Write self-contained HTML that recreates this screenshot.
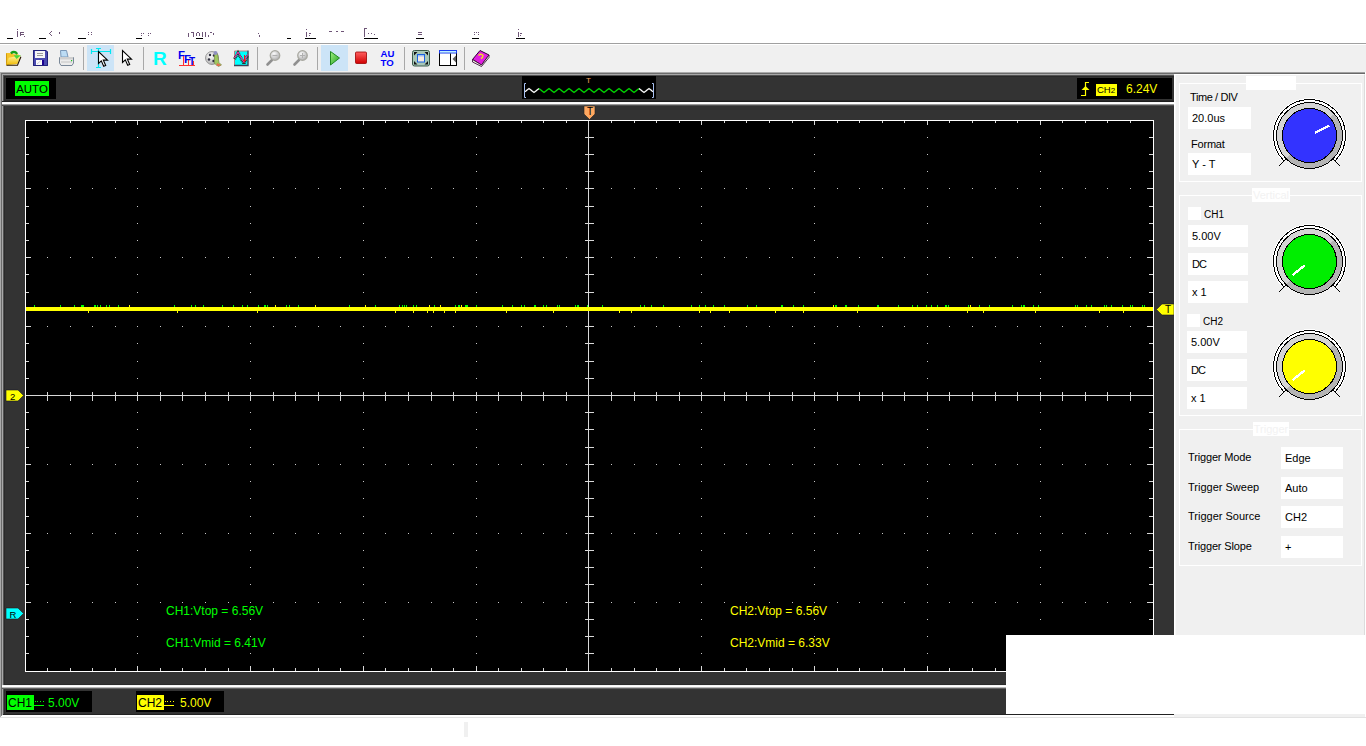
<!DOCTYPE html>
<html><head><meta charset="utf-8">
<style>
*{box-sizing:border-box}
html,body{margin:0;padding:0}
body{width:1366px;height:746px;overflow:hidden;background:#fff;position:relative;font-family:"Liberation Sans",sans-serif;}
.a{position:absolute}
.tb{background:#f0f0f0}
.sep{position:absolute;width:1px;background:#a0a0a0;border-right:1px solid #fff;width:2px}
.panel-lbl{position:absolute;font-size:11px;color:#000;white-space:nowrap}
.ebox{position:absolute;background:#fff;font-size:11px;color:#000;padding-left:4px;white-space:nowrap}
.grp{position:absolute;border:1px solid #fff;box-shadow:inset 0 0 0 0 #ddd}
.gtitle{position:absolute;background:#fff;color:#f2f2f2;font-size:11px;line-height:14px;text-align:center}
</style></head><body>
<!-- menu -->
<div class="a" style="left:0;top:43px;width:1366px;height:1px;background:#a0a0a0"></div>
<div class="a tb" style="left:0;top:44px;width:1366px;height:28px;border-top:1px solid #fff"></div>
<svg class="a" style="left:0;top:0" width="560" height="44" shape-rendering="crispEdges"><path d="M7 38h6v1h-6zM39 38h7v1h-7zM78 38h8v1h-8zM136 38h6v1h-6zM196 38h7v1h-7zM287 38h4v1h-4zM305 38h11v1h-11zM364 38h14v1h-14zM416 38h8v1h-8zM472 38h7v1h-7zM516 38h9v1h-9z" fill="#000"/><path d="M17 29h1v1h-1zM17 31h1v6h-1zM20 32h1v4h-1zM21 32h3v1h-3zM21 34h3v1h-3zM24 36h1v1h-1zM51 31h1v1h-1zM50 32h1v1h-1zM49 33h1v1h-1zM50 34h1v1h-1zM51 35h1v1h-1zM59 32h1v2h-1zM88 32h1v1h-1zM91 32h1v1h-1zM88 34h1v1h-1zM91 34h1v1h-1zM141 33h1v1h-1zM143 33h1v1h-1zM148 33h1v1h-1zM150 33h1v1h-1zM141 35h1v1h-1zM148 35h1v1h-1zM188 33h1v4h-1zM191 32h1v1h-1zM192 32h2v1h-2zM193 33h1v4h-1zM196 33h1v3h-1zM199 33h1v3h-1zM197 32h2v1h-2zM202 32h1v5h-1zM205 32h1v5h-1zM208 35h1v2h-1zM210 32h2v1h-2zM213 33h1v2h-1zM258 33h1v1h-1zM259 35h1v2h-1zM306 29h1v1h-1zM306 32h1v5h-1zM309 33h2v1h-2zM309 35h1v1h-1zM329 31h3v1h-3zM336 31h2v1h-2zM341 31h3v1h-3zM364 28h3v1h-3zM364 29h1v8h-1zM368 33h1v1h-1zM371 33h1v1h-1zM374 34h1v1h-1zM418 32h4v1h-4zM418 34h4v1h-4zM474 32h1v1h-1zM476 32h1v1h-1zM478 32h1v1h-1zM474 34h1v1h-1zM478 34h1v1h-1zM518 29h1v1h-1zM518 32h1v5h-1zM520 33h2v1h-2zM520 35h1v1h-1z" fill="#4a2a55" fill-opacity="0.8"/></svg>
<div class="a" style="left:83px;top:47px;width:1px;height:23px;background:#a8a8a8"></div><div class="a" style="left:143px;top:47px;width:1px;height:23px;background:#a8a8a8"></div><div class="a" style="left:257px;top:47px;width:1px;height:23px;background:#a8a8a8"></div><div class="a" style="left:317px;top:47px;width:1px;height:23px;background:#a8a8a8"></div><div class="a" style="left:404px;top:47px;width:1px;height:23px;background:#a8a8a8"></div><div class="a" style="left:464px;top:47px;width:1px;height:23px;background:#a8a8a8"></div><div class="a" style="left:87px;top:45px;width:27px;height:26px;background:#cce4f7"></div><div class="a" style="left:321px;top:45px;width:27px;height:26px;background:#cce4f7"></div><svg class="a" style="left:0;top:0" width="520" height="72">
<defs>
<linearGradient id="fy" x1="0" y1="0" x2="0" y2="1"><stop offset="0" stop-color="#fff6a0"/><stop offset="1" stop-color="#f0b800"/></linearGradient>
<linearGradient id="pg" x1="0" y1="0" x2="1" y2="1"><stop offset="0" stop-color="#a0f080"/><stop offset="1" stop-color="#20a020"/></linearGradient>
<radialGradient id="mg" cx="0.4" cy="0.35" r="0.7"><stop offset="0" stop-color="#fff"/><stop offset="1" stop-color="#a8a8a8"/></radialGradient>
<linearGradient id="rg" x1="0" y1="0" x2="0" y2="1"><stop offset="0" stop-color="#ff6060"/><stop offset="1" stop-color="#d00000"/></linearGradient>
</defs>
<!-- open folder -->
<path d="M6 53h6.5l1 1.2h5v3.5l-12.5 7.8z" fill="#f6c428"/>
<path d="M6.5 53.5v11.5" stroke="#d09a10" stroke-width="1"/>
<path d="M8.8 57.8l12 -2.2 -3.4 8.4 -11.2 1.2z" fill="url(#fy)"/>
<path d="M6.5 65.3h11l3.4 -8.6" stroke="#2a1800" stroke-width="1.1" fill="none"/>
<path d="M10.8 53.2q3.8 -2.6 6.4 0.8" stroke="#18a018" stroke-width="2.3" fill="none"/>
<path d="M13.6 55.3h7.4l-4.4 3.6z" fill="#4ad83a"/>
<!-- floppy -->
<path d="M33 50h13l2 2v14h-15z" fill="#4a4ab0"/>
<path d="M33.5 50.5h12.5l1.5 1.5v13.5h-14z" fill="none" stroke="#23237a" stroke-width="1"/>
<rect x="35" y="51" width="10" height="7" fill="#f6f6f6"/>
<path d="M37 53.5h6M37 55.5h6" stroke="#9a9a9a" stroke-width="1"/>
<rect x="36" y="60" width="6" height="5" fill="#fafafa"/>
<rect x="42" y="60" width="2" height="5" fill="#1c0090"/>
<path d="M37 64l4 -3.5" stroke="#c0c0d0" stroke-width="0.8"/>
<!-- printer -->
<path d="M60.5 50.5h6l1.5 6.5h-7z" fill="#bcdcf4" stroke="#7a98b8" stroke-width="1"/>
<path d="M59.5 57.5h14v5.5l-1.5 2.5h-11l-1.5 -2.5z" fill="#ececec" stroke="#7a8898" stroke-width="1"/>
<rect x="60" y="57" width="13" height="2.5" fill="#cfcfcf"/>
<rect x="61" y="61" width="11" height="2" fill="#d8d8d8"/>
<rect x="71" y="60" width="1.2" height="1.2" fill="#20c020"/>
<!-- crosshair select -->
<path d="M91 51.5h20M91.5 49v5M110.5 49v5M98.5 48v20M96 48.5h5M96 67.5h5" stroke="#00e8f0" stroke-width="1.2" fill="none"/>
<path d="M98.5 51.5v12l2.8 -2.6 2.4 5.4 2 -0.9 -2.4 -5.3h4.2z" fill="#fff" stroke="#000" stroke-width="1.1" stroke-linejoin="miter"/>
<!-- arrow -->
<path d="M122.5 50.5v12l2.8 -2.6 2.4 5.4 2 -0.9 -2.4 -5.3h4.2z" fill="#fff" stroke="#000" stroke-width="1.1"/>
<!-- R -->
<text x="153" y="65" font-family="Liberation Sans" font-weight="bold" font-size="19" fill="#00ffff">R</text>
<!-- FFT -->
<text x="178" y="58.6" font-family="Liberation Sans" font-weight="bold" font-size="11.5" fill="#0000ee">F</text>
<text x="184" y="63" font-family="Liberation Sans" font-weight="bold" font-size="11.5" fill="#0000ee">F</text>
<text x="189" y="64.6" font-family="Liberation Sans" font-weight="bold" font-size="10" fill="#0000ee">T</text>
<path d="M179 65.5h16M183.5 56v9M188.5 60v5M193.5 61v4" stroke="#ff3030" stroke-width="1" fill="none"/>
<!-- film reel -->
<circle cx="212" cy="58" r="6.5" fill="url(#mg)" stroke="#8a8a8a" stroke-width="0.8"/>
<circle cx="210" cy="55" r="1.2" fill="#303040"/><circle cx="214" cy="55.5" r="1.2" fill="#303040"/><circle cx="209" cy="59.5" r="1.2" fill="#303040"/><circle cx="213.5" cy="61" r="1.2" fill="#303040"/>
<path d="M214.5 52.5l3 1 1.5 9 2.5 2.5 -3 1.5 -4 -3z" fill="#a0c860" stroke="#708040" stroke-width="0.6"/>
<path d="M217 63l4 2 -1.5 1h-3z" fill="#e07050"/>
<circle cx="215.5" cy="53" r="2" fill="#9090c0"/>
<!-- waveform icon -->
<rect x="234" y="51" width="14" height="14" fill="#00ffff"/>
<path d="M234.5 65v-14h13" stroke="#b88080" stroke-width="1" fill="none"/>
<path d="M248 50.5v15h-14" stroke="#3a4458" stroke-width="1.4" fill="none"/>
<path d="M234.5 59l3.5 -6 6 10.5 3.5 -8" stroke="#2a3a2a" stroke-width="3.2" fill="none" stroke-dasharray="1 0.6"/>
<path d="M234.5 58l3.5 -6 6 10.5 3.5 -8" stroke="#ff20b0" stroke-width="1" fill="none"/>
<path d="M244.5 55v6.5M243 59.5l1.5 2 1.5 -2" stroke="#ff1010" stroke-width="1" fill="none"/>
<!-- zoom out -->
<path d="M267.5 64.5l4.5 -4.5" stroke="#909090" stroke-width="2.6" stroke-linecap="round"/>
<circle cx="275" cy="55.5" r="4.8" fill="url(#mg)" stroke="#a8a8a0" stroke-width="1.2"/>
<path d="M272.5 55.5h5" stroke="#b0b0b0" stroke-width="1.2"/>
<!-- zoom in -->
<path d="M294.5 64.5l4.5 -4.5" stroke="#909090" stroke-width="2.6" stroke-linecap="round"/>
<circle cx="302.5" cy="55.5" r="4.8" fill="url(#mg)" stroke="#a8a8a0" stroke-width="1.2"/>
<path d="M300 55.5h5M302.5 53v5" stroke="#b0b0b0" stroke-width="1.2"/>
<!-- play -->
<path d="M330.5 51.5l9 6.5-9 7z" fill="url(#pg)" stroke="#208a20" stroke-width="1"/>
<!-- stop -->
<rect x="355.5" y="52" width="11" height="11.5" rx="1" fill="url(#rg)" stroke="#9a0000" stroke-width="0.8"/>
<!-- AUTO -->
<text x="380.5" y="57" font-family="Liberation Sans" font-weight="bold" font-size="9.6" fill="#0000ff">AU</text>
<text x="380.5" y="66" font-family="Liberation Sans" font-weight="bold" font-size="9.6" fill="#0000ff">TO</text>
<!-- fullscreen -->
<rect x="412.5" y="50.5" width="17" height="15.5" rx="2" fill="#a8c8b8" stroke="#3a5a4a" stroke-width="1"/>
<path d="M414 52h3.5l-3.5 3.5zM428 52h-3.5l3.5 3.5zM414 64.5h3.5l-3.5 -3.5zM428 64.5h-3.5l3.5 -3.5z" fill="#111"/>
<rect x="417.5" y="54.5" width="7" height="7.5" fill="#f8ece0" stroke="#1a60e0" stroke-width="1"/>
<rect x="418" y="55" width="6" height="1.5" fill="#a0c0f0"/>
<!-- window -->
<rect x="439.5" y="50.5" width="17" height="15" fill="#fff" stroke="#000" stroke-width="1"/>
<rect x="439" y="50" width="18" height="3.5" fill="#1a3cf0"/>
<rect x="440" y="51" width="16" height="1.6" fill="#c0f0ff"/>
<path d="M450.5 53.5v12" stroke="#000" stroke-width="1"/>
<path d="M456 55.5l-3.5 3.5 3.5 3.5z" fill="#606060"/>
<!-- help book -->
<path d="M472.5 59.5l7.5 -9 9 4.5 -7.5 10z" fill="#e020e0" stroke="#300030" stroke-width="1"/>
<path d="M472.5 59.5v2.5l9 4.5 7.5 -9v-2.5l-7.5 10z" fill="#f0f0e0" stroke="#300030" stroke-width="0.8"/>
<path d="M478.5 55.5q2.5 -2.5 4.5 0q0 2 -2 3" stroke="#f0e020" stroke-width="1.4" fill="none"/>
</svg>
<!-- scope frame -->
<div class="a" style="left:0;top:72px;width:1365px;height:1px;background:#a0a0a0"></div>
<div class="a" style="left:0;top:73px;width:1365px;height:1px;background:#696969"></div>
<div class="a" style="left:0;top:72px;width:1174px;height:643px;background:#aaa"></div>
<div class="a" style="left:1px;top:73px;width:1173px;height:642px;background:#6c6c6c"></div>
<div class="a" style="left:2px;top:74px;width:1172px;height:641px;background:#a8a8a8"></div>
<div class="a" style="left:3px;top:75px;width:1171px;height:640px;background:#525252"></div>
<div class="a" style="left:4px;top:76px;width:1170px;height:639px;background:#2a2a2a"></div>
<div class="a" style="left:5px;top:77px;width:1169px;height:637px;background:#333"></div>
<div class="a" style="left:3px;top:714px;width:1171px;height:1px;background:#222"></div>
<div class="a" style="left:0;top:715px;width:1px;height:2px;background:#aaa"></div>
<div class="a" style="left:1px;top:715px;width:1px;height:1px;background:#8a8a8a"></div>
<!-- separators -->
<div class="a" style="left:4px;top:100px;width:1170px;height:1px;background:#2a2a2a"></div>
<div class="a" style="left:2px;top:101px;width:1172px;height:5px;background:linear-gradient(#1e1e1e 0 1px,#f8f8f8 1px 2px,#fff 2px 3px,#9a9a9a 3px 4px,#505050 4px 5px)"></div>
<div class="a" style="left:4px;top:684px;width:1170px;height:1px;background:#2a2a2a"></div>
<div class="a" style="left:2px;top:685px;width:1172px;height:4px;background:linear-gradient(#f4f4f4 0 1px,#fff 1px 2px,#b8b8b8 2px 3px,#606060 3px 4px)"></div>
<!-- top status -->
<div class="a" style="left:6px;top:78px;width:50px;height:21px;background:#000"></div>
<div class="a" style="left:15px;top:81px;width:34px;height:15px;background:#00ff00;color:#000;font-size:11.5px;line-height:17px;text-align:center">AUTO</div>
<div class="a" style="left:522px;top:76px;width:134px;height:23px;background:#000"></div>
<svg class="a" style="left:0;top:0" width="1366" height="746"><polyline points="525.0,91.70 525.5,91.30 526.0,90.90 526.5,90.50 527.0,90.10 527.5,89.70 528.0,89.30 528.5,88.90 529.0,88.50 529.5,88.90 530.0,89.30 530.5,89.70 531.0,90.10 531.5,90.50 532.0,90.90 532.5,91.30 533.0,91.70 533.5,92.10 534.0,92.50 534.5,92.10 535.0,91.70 535.5,91.30 536.0,90.90 536.5,90.50 537.0,90.10 537.5,89.70 538.0,89.30 538.5,88.90 539.0,88.50" fill="none" stroke="#fff" stroke-width="1.3" stroke-linejoin="miter"/><polyline points="539.0,88.50 539.5,88.90 540.0,89.30 540.5,89.70 541.0,90.10 541.5,90.50 542.0,90.90 542.5,91.30 543.0,91.70 543.5,92.10 544.0,92.50 544.5,92.10 545.0,91.70 545.5,91.30 546.0,90.90 546.5,90.50 547.0,90.10 547.5,89.70 548.0,89.30 548.5,88.90 549.0,88.50 549.5,88.90 550.0,89.30 550.5,89.70 551.0,90.10 551.5,90.50 552.0,90.90 552.5,91.30 553.0,91.70 553.5,92.10 554.0,92.50 554.5,92.10 555.0,91.70 555.5,91.30 556.0,90.90 556.5,90.50 557.0,90.10 557.5,89.70 558.0,89.30 558.5,88.90 559.0,88.50 559.5,88.90 560.0,89.30 560.5,89.70 561.0,90.10 561.5,90.50 562.0,90.90 562.5,91.30 563.0,91.70 563.5,92.10 564.0,92.50 564.5,92.10 565.0,91.70 565.5,91.30 566.0,90.90 566.5,90.50 567.0,90.10 567.5,89.70 568.0,89.30 568.5,88.90 569.0,88.50 569.5,88.90 570.0,89.30 570.5,89.70 571.0,90.10 571.5,90.50 572.0,90.90 572.5,91.30 573.0,91.70 573.5,92.10 574.0,92.50 574.5,92.10 575.0,91.70 575.5,91.30 576.0,90.90 576.5,90.50 577.0,90.10 577.5,89.70 578.0,89.30 578.5,88.90 579.0,88.50 579.5,88.90 580.0,89.30 580.5,89.70 581.0,90.10 581.5,90.50 582.0,90.90 582.5,91.30 583.0,91.70 583.5,92.10 584.0,92.50 584.5,92.10 585.0,91.70 585.5,91.30 586.0,90.90 586.5,90.50 587.0,90.10 587.5,89.70 588.0,89.30 588.5,88.90 589.0,88.50 589.5,88.90 590.0,89.30 590.5,89.70 591.0,90.10 591.5,90.50 592.0,90.90 592.5,91.30 593.0,91.70 593.5,92.10 594.0,92.50 594.5,92.10 595.0,91.70 595.5,91.30 596.0,90.90 596.5,90.50 597.0,90.10 597.5,89.70 598.0,89.30 598.5,88.90 599.0,88.50 599.5,88.90 600.0,89.30 600.5,89.70 601.0,90.10 601.5,90.50 602.0,90.90 602.5,91.30 603.0,91.70 603.5,92.10 604.0,92.50 604.5,92.10 605.0,91.70 605.5,91.30 606.0,90.90 606.5,90.50 607.0,90.10 607.5,89.70 608.0,89.30 608.5,88.90 609.0,88.50 609.5,88.90 610.0,89.30 610.5,89.70 611.0,90.10 611.5,90.50 612.0,90.90 612.5,91.30 613.0,91.70 613.5,92.10 614.0,92.50 614.5,92.10 615.0,91.70 615.5,91.30 616.0,90.90 616.5,90.50 617.0,90.10 617.5,89.70 618.0,89.30 618.5,88.90 619.0,88.50 619.5,88.90 620.0,89.30 620.5,89.70 621.0,90.10 621.5,90.50 622.0,90.90 622.5,91.30 623.0,91.70 623.5,92.10 624.0,92.50 624.5,92.10 625.0,91.70 625.5,91.30 626.0,90.90 626.5,90.50 627.0,90.10 627.5,89.70 628.0,89.30 628.5,88.90 629.0,88.50 629.5,88.90 630.0,89.30 630.5,89.70 631.0,90.10 631.5,90.50 632.0,90.90 632.5,91.30 633.0,91.70 633.5,92.10 634.0,92.50 634.5,92.10 635.0,91.70 635.5,91.30 636.0,90.90 636.5,90.50 637.0,90.10 637.5,89.70 638.0,89.30 638.5,88.90 639.0,88.50" fill="none" stroke="#00dd00" stroke-width="1.3"/><polyline points="639.0,88.50 639.5,88.90 640.0,89.30 640.5,89.70 641.0,90.10 641.5,90.50 642.0,90.90 642.5,91.30 643.0,91.70 643.5,92.10 644.0,92.50 644.5,92.10 645.0,91.70 645.5,91.30 646.0,90.90 646.5,90.50 647.0,90.10 647.5,89.70 648.0,89.30 648.5,88.90 649.0,88.50 649.5,88.90 650.0,89.30 650.5,89.70 651.0,90.10 651.5,90.50 652.0,90.90 652.5,91.30 653.0,91.70" fill="none" stroke="#fff" stroke-width="1.3"/><path d="M526 83.5h-1.5v14h1.5M652 83.5h1.5v14h-1.5" stroke="#a8c0f0" stroke-width="1" fill="none"/></svg><div class="a" style="left:586px;top:76px;font-size:8px;line-height:9px;color:#f4a460">T</div>
<div class="a" style="left:1077px;top:78px;width:95px;height:21px;background:#000"></div>

<svg class="a" style="left:0;top:0" width="1366" height="746">
<path d="M1081 95.5h4.5v-13h3.5" stroke="#ffff00" stroke-width="1.2" fill="none"/>
<path d="M1081.5 90l4-4 4 4z" fill="#ffff00"/>
</svg>
<div class="a" style="left:1096px;top:84px;width:21px;height:12px;background:#ffff00;color:#000;font-size:9.5px;line-height:12px;padding-left:1px;white-space:nowrap">CH<span style="font-size:8px">2</span></div>
<div class="a" style="left:1126px;top:82px;color:#ffff00;font-size:12px;line-height:15px">6.24V</div>

<!-- grid -->
<div class="a" style="left:25px;top:120px;width:1129px;height:552px;background:#000"></div>
<svg class="a" style="left:0;top:0" width="1366" height="746" shape-rendering="crispEdges"><path d="M47 188h1v1h-1zM70 188h1v1h-1zM92 188h1v1h-1zM115 188h1v1h-1zM137 188h1v1h-1zM160 188h1v1h-1zM182 188h1v1h-1zM205 188h1v1h-1zM228 188h1v1h-1zM250 188h1v1h-1zM273 188h1v1h-1zM295 188h1v1h-1zM318 188h1v1h-1zM340 188h1v1h-1zM363 188h1v1h-1zM385 188h1v1h-1zM408 188h1v1h-1zM431 188h1v1h-1zM453 188h1v1h-1zM476 188h1v1h-1zM498 188h1v1h-1zM521 188h1v1h-1zM543 188h1v1h-1zM566 188h1v1h-1zM611 188h1v1h-1zM634 188h1v1h-1zM656 188h1v1h-1zM679 188h1v1h-1zM701 188h1v1h-1zM724 188h1v1h-1zM746 188h1v1h-1zM769 188h1v1h-1zM792 188h1v1h-1zM814 188h1v1h-1zM837 188h1v1h-1zM859 188h1v1h-1zM882 188h1v1h-1zM904 188h1v1h-1zM927 188h1v1h-1zM949 188h1v1h-1zM972 188h1v1h-1zM995 188h1v1h-1zM1017 188h1v1h-1zM1040 188h1v1h-1zM1062 188h1v1h-1zM1085 188h1v1h-1zM1107 188h1v1h-1zM1130 188h1v1h-1zM47 257h1v1h-1zM70 257h1v1h-1zM92 257h1v1h-1zM115 257h1v1h-1zM137 257h1v1h-1zM160 257h1v1h-1zM182 257h1v1h-1zM205 257h1v1h-1zM228 257h1v1h-1zM250 257h1v1h-1zM273 257h1v1h-1zM295 257h1v1h-1zM318 257h1v1h-1zM340 257h1v1h-1zM363 257h1v1h-1zM385 257h1v1h-1zM408 257h1v1h-1zM431 257h1v1h-1zM453 257h1v1h-1zM476 257h1v1h-1zM498 257h1v1h-1zM521 257h1v1h-1zM543 257h1v1h-1zM566 257h1v1h-1zM611 257h1v1h-1zM634 257h1v1h-1zM656 257h1v1h-1zM679 257h1v1h-1zM701 257h1v1h-1zM724 257h1v1h-1zM746 257h1v1h-1zM769 257h1v1h-1zM792 257h1v1h-1zM814 257h1v1h-1zM837 257h1v1h-1zM859 257h1v1h-1zM882 257h1v1h-1zM904 257h1v1h-1zM927 257h1v1h-1zM949 257h1v1h-1zM972 257h1v1h-1zM995 257h1v1h-1zM1017 257h1v1h-1zM1040 257h1v1h-1zM1062 257h1v1h-1zM1085 257h1v1h-1zM1107 257h1v1h-1zM1130 257h1v1h-1zM47 326h1v1h-1zM70 326h1v1h-1zM92 326h1v1h-1zM115 326h1v1h-1zM137 326h1v1h-1zM160 326h1v1h-1zM182 326h1v1h-1zM205 326h1v1h-1zM228 326h1v1h-1zM250 326h1v1h-1zM273 326h1v1h-1zM295 326h1v1h-1zM318 326h1v1h-1zM340 326h1v1h-1zM363 326h1v1h-1zM385 326h1v1h-1zM408 326h1v1h-1zM431 326h1v1h-1zM453 326h1v1h-1zM476 326h1v1h-1zM498 326h1v1h-1zM521 326h1v1h-1zM543 326h1v1h-1zM566 326h1v1h-1zM611 326h1v1h-1zM634 326h1v1h-1zM656 326h1v1h-1zM679 326h1v1h-1zM701 326h1v1h-1zM724 326h1v1h-1zM746 326h1v1h-1zM769 326h1v1h-1zM792 326h1v1h-1zM814 326h1v1h-1zM837 326h1v1h-1zM859 326h1v1h-1zM882 326h1v1h-1zM904 326h1v1h-1zM927 326h1v1h-1zM949 326h1v1h-1zM972 326h1v1h-1zM995 326h1v1h-1zM1017 326h1v1h-1zM1040 326h1v1h-1zM1062 326h1v1h-1zM1085 326h1v1h-1zM1107 326h1v1h-1zM1130 326h1v1h-1zM47 464h1v1h-1zM70 464h1v1h-1zM92 464h1v1h-1zM115 464h1v1h-1zM137 464h1v1h-1zM160 464h1v1h-1zM182 464h1v1h-1zM205 464h1v1h-1zM228 464h1v1h-1zM250 464h1v1h-1zM273 464h1v1h-1zM295 464h1v1h-1zM318 464h1v1h-1zM340 464h1v1h-1zM363 464h1v1h-1zM385 464h1v1h-1zM408 464h1v1h-1zM431 464h1v1h-1zM453 464h1v1h-1zM476 464h1v1h-1zM498 464h1v1h-1zM521 464h1v1h-1zM543 464h1v1h-1zM566 464h1v1h-1zM611 464h1v1h-1zM634 464h1v1h-1zM656 464h1v1h-1zM679 464h1v1h-1zM701 464h1v1h-1zM724 464h1v1h-1zM746 464h1v1h-1zM769 464h1v1h-1zM792 464h1v1h-1zM814 464h1v1h-1zM837 464h1v1h-1zM859 464h1v1h-1zM882 464h1v1h-1zM904 464h1v1h-1zM927 464h1v1h-1zM949 464h1v1h-1zM972 464h1v1h-1zM995 464h1v1h-1zM1017 464h1v1h-1zM1040 464h1v1h-1zM1062 464h1v1h-1zM1085 464h1v1h-1zM1107 464h1v1h-1zM1130 464h1v1h-1zM47 533h1v1h-1zM70 533h1v1h-1zM92 533h1v1h-1zM115 533h1v1h-1zM137 533h1v1h-1zM160 533h1v1h-1zM182 533h1v1h-1zM205 533h1v1h-1zM228 533h1v1h-1zM250 533h1v1h-1zM273 533h1v1h-1zM295 533h1v1h-1zM318 533h1v1h-1zM340 533h1v1h-1zM363 533h1v1h-1zM385 533h1v1h-1zM408 533h1v1h-1zM431 533h1v1h-1zM453 533h1v1h-1zM476 533h1v1h-1zM498 533h1v1h-1zM521 533h1v1h-1zM543 533h1v1h-1zM566 533h1v1h-1zM611 533h1v1h-1zM634 533h1v1h-1zM656 533h1v1h-1zM679 533h1v1h-1zM701 533h1v1h-1zM724 533h1v1h-1zM746 533h1v1h-1zM769 533h1v1h-1zM792 533h1v1h-1zM814 533h1v1h-1zM837 533h1v1h-1zM859 533h1v1h-1zM882 533h1v1h-1zM904 533h1v1h-1zM927 533h1v1h-1zM949 533h1v1h-1zM972 533h1v1h-1zM995 533h1v1h-1zM1017 533h1v1h-1zM1040 533h1v1h-1zM1062 533h1v1h-1zM1085 533h1v1h-1zM1107 533h1v1h-1zM1130 533h1v1h-1zM47 602h1v1h-1zM70 602h1v1h-1zM92 602h1v1h-1zM115 602h1v1h-1zM137 602h1v1h-1zM160 602h1v1h-1zM182 602h1v1h-1zM205 602h1v1h-1zM228 602h1v1h-1zM250 602h1v1h-1zM273 602h1v1h-1zM295 602h1v1h-1zM318 602h1v1h-1zM340 602h1v1h-1zM363 602h1v1h-1zM385 602h1v1h-1zM408 602h1v1h-1zM431 602h1v1h-1zM453 602h1v1h-1zM476 602h1v1h-1zM498 602h1v1h-1zM521 602h1v1h-1zM543 602h1v1h-1zM566 602h1v1h-1zM611 602h1v1h-1zM634 602h1v1h-1zM656 602h1v1h-1zM679 602h1v1h-1zM701 602h1v1h-1zM724 602h1v1h-1zM746 602h1v1h-1zM769 602h1v1h-1zM792 602h1v1h-1zM814 602h1v1h-1zM837 602h1v1h-1zM859 602h1v1h-1zM882 602h1v1h-1zM904 602h1v1h-1zM927 602h1v1h-1zM949 602h1v1h-1zM972 602h1v1h-1zM995 602h1v1h-1zM1017 602h1v1h-1zM1040 602h1v1h-1zM1062 602h1v1h-1zM1085 602h1v1h-1zM1107 602h1v1h-1zM1130 602h1v1h-1zM137 137h1v1h-1zM137 154h1v1h-1zM137 171h1v1h-1zM137 206h1v1h-1zM137 223h1v1h-1zM137 240h1v1h-1zM137 274h1v1h-1zM137 292h1v1h-1zM137 309h1v1h-1zM137 343h1v1h-1zM137 361h1v1h-1zM137 378h1v1h-1zM137 412h1v1h-1zM137 429h1v1h-1zM137 447h1v1h-1zM137 481h1v1h-1zM137 498h1v1h-1zM137 516h1v1h-1zM137 550h1v1h-1zM137 567h1v1h-1zM137 584h1v1h-1zM137 619h1v1h-1zM137 636h1v1h-1zM137 653h1v1h-1zM250 137h1v1h-1zM250 154h1v1h-1zM250 171h1v1h-1zM250 206h1v1h-1zM250 223h1v1h-1zM250 240h1v1h-1zM250 274h1v1h-1zM250 292h1v1h-1zM250 309h1v1h-1zM250 343h1v1h-1zM250 361h1v1h-1zM250 378h1v1h-1zM250 412h1v1h-1zM250 429h1v1h-1zM250 447h1v1h-1zM250 481h1v1h-1zM250 498h1v1h-1zM250 516h1v1h-1zM250 550h1v1h-1zM250 567h1v1h-1zM250 584h1v1h-1zM250 619h1v1h-1zM250 636h1v1h-1zM250 653h1v1h-1zM363 137h1v1h-1zM363 154h1v1h-1zM363 171h1v1h-1zM363 206h1v1h-1zM363 223h1v1h-1zM363 240h1v1h-1zM363 274h1v1h-1zM363 292h1v1h-1zM363 309h1v1h-1zM363 343h1v1h-1zM363 361h1v1h-1zM363 378h1v1h-1zM363 412h1v1h-1zM363 429h1v1h-1zM363 447h1v1h-1zM363 481h1v1h-1zM363 498h1v1h-1zM363 516h1v1h-1zM363 550h1v1h-1zM363 567h1v1h-1zM363 584h1v1h-1zM363 619h1v1h-1zM363 636h1v1h-1zM363 653h1v1h-1zM476 137h1v1h-1zM476 154h1v1h-1zM476 171h1v1h-1zM476 206h1v1h-1zM476 223h1v1h-1zM476 240h1v1h-1zM476 274h1v1h-1zM476 292h1v1h-1zM476 309h1v1h-1zM476 343h1v1h-1zM476 361h1v1h-1zM476 378h1v1h-1zM476 412h1v1h-1zM476 429h1v1h-1zM476 447h1v1h-1zM476 481h1v1h-1zM476 498h1v1h-1zM476 516h1v1h-1zM476 550h1v1h-1zM476 567h1v1h-1zM476 584h1v1h-1zM476 619h1v1h-1zM476 636h1v1h-1zM476 653h1v1h-1zM701 137h1v1h-1zM701 154h1v1h-1zM701 171h1v1h-1zM701 206h1v1h-1zM701 223h1v1h-1zM701 240h1v1h-1zM701 274h1v1h-1zM701 292h1v1h-1zM701 309h1v1h-1zM701 343h1v1h-1zM701 361h1v1h-1zM701 378h1v1h-1zM701 412h1v1h-1zM701 429h1v1h-1zM701 447h1v1h-1zM701 481h1v1h-1zM701 498h1v1h-1zM701 516h1v1h-1zM701 550h1v1h-1zM701 567h1v1h-1zM701 584h1v1h-1zM701 619h1v1h-1zM701 636h1v1h-1zM701 653h1v1h-1zM814 137h1v1h-1zM814 154h1v1h-1zM814 171h1v1h-1zM814 206h1v1h-1zM814 223h1v1h-1zM814 240h1v1h-1zM814 274h1v1h-1zM814 292h1v1h-1zM814 309h1v1h-1zM814 343h1v1h-1zM814 361h1v1h-1zM814 378h1v1h-1zM814 412h1v1h-1zM814 429h1v1h-1zM814 447h1v1h-1zM814 481h1v1h-1zM814 498h1v1h-1zM814 516h1v1h-1zM814 550h1v1h-1zM814 567h1v1h-1zM814 584h1v1h-1zM814 619h1v1h-1zM814 636h1v1h-1zM814 653h1v1h-1zM927 137h1v1h-1zM927 154h1v1h-1zM927 171h1v1h-1zM927 206h1v1h-1zM927 223h1v1h-1zM927 240h1v1h-1zM927 274h1v1h-1zM927 292h1v1h-1zM927 309h1v1h-1zM927 343h1v1h-1zM927 361h1v1h-1zM927 378h1v1h-1zM927 412h1v1h-1zM927 429h1v1h-1zM927 447h1v1h-1zM927 481h1v1h-1zM927 498h1v1h-1zM927 516h1v1h-1zM927 550h1v1h-1zM927 567h1v1h-1zM927 584h1v1h-1zM927 619h1v1h-1zM927 636h1v1h-1zM927 653h1v1h-1zM1040 137h1v1h-1zM1040 154h1v1h-1zM1040 171h1v1h-1zM1040 206h1v1h-1zM1040 223h1v1h-1zM1040 240h1v1h-1zM1040 274h1v1h-1zM1040 292h1v1h-1zM1040 309h1v1h-1zM1040 343h1v1h-1zM1040 361h1v1h-1zM1040 378h1v1h-1zM1040 412h1v1h-1zM1040 429h1v1h-1zM1040 447h1v1h-1zM1040 481h1v1h-1zM1040 498h1v1h-1zM1040 516h1v1h-1zM1040 550h1v1h-1zM1040 567h1v1h-1zM1040 584h1v1h-1zM1040 619h1v1h-1zM1040 636h1v1h-1zM1040 653h1v1h-1z" fill="#c8c8c8"/><path d="M47 121h1v2h-1zM47 668h1v3h-1zM47 392h1v9h-1zM70 121h1v2h-1zM70 668h1v3h-1zM70 392h1v9h-1zM92 121h1v2h-1zM92 668h1v3h-1zM92 392h1v9h-1zM115 121h1v2h-1zM115 668h1v3h-1zM115 392h1v9h-1zM137 121h1v4h-1zM137 666h1v5h-1zM137 392h1v9h-1zM160 121h1v2h-1zM160 668h1v3h-1zM160 392h1v9h-1zM182 121h1v2h-1zM182 668h1v3h-1zM182 392h1v9h-1zM205 121h1v2h-1zM205 668h1v3h-1zM205 392h1v9h-1zM228 121h1v2h-1zM228 668h1v3h-1zM228 392h1v9h-1zM250 121h1v4h-1zM250 666h1v5h-1zM250 392h1v9h-1zM273 121h1v2h-1zM273 668h1v3h-1zM273 392h1v9h-1zM295 121h1v2h-1zM295 668h1v3h-1zM295 392h1v9h-1zM318 121h1v2h-1zM318 668h1v3h-1zM318 392h1v9h-1zM340 121h1v2h-1zM340 668h1v3h-1zM340 392h1v9h-1zM363 121h1v4h-1zM363 666h1v5h-1zM363 392h1v9h-1zM385 121h1v2h-1zM385 668h1v3h-1zM385 392h1v9h-1zM408 121h1v2h-1zM408 668h1v3h-1zM408 392h1v9h-1zM431 121h1v2h-1zM431 668h1v3h-1zM431 392h1v9h-1zM453 121h1v2h-1zM453 668h1v3h-1zM453 392h1v9h-1zM476 121h1v4h-1zM476 666h1v5h-1zM476 392h1v9h-1zM498 121h1v2h-1zM498 668h1v3h-1zM498 392h1v9h-1zM521 121h1v2h-1zM521 668h1v3h-1zM521 392h1v9h-1zM543 121h1v2h-1zM543 668h1v3h-1zM543 392h1v9h-1zM566 121h1v2h-1zM566 668h1v3h-1zM566 392h1v9h-1zM611 121h1v2h-1zM611 668h1v3h-1zM611 392h1v9h-1zM634 121h1v2h-1zM634 668h1v3h-1zM634 392h1v9h-1zM656 121h1v2h-1zM656 668h1v3h-1zM656 392h1v9h-1zM679 121h1v2h-1zM679 668h1v3h-1zM679 392h1v9h-1zM701 121h1v4h-1zM701 666h1v5h-1zM701 392h1v9h-1zM724 121h1v2h-1zM724 668h1v3h-1zM724 392h1v9h-1zM746 121h1v2h-1zM746 668h1v3h-1zM746 392h1v9h-1zM769 121h1v2h-1zM769 668h1v3h-1zM769 392h1v9h-1zM792 121h1v2h-1zM792 668h1v3h-1zM792 392h1v9h-1zM814 121h1v4h-1zM814 666h1v5h-1zM814 392h1v9h-1zM837 121h1v2h-1zM837 668h1v3h-1zM837 392h1v9h-1zM859 121h1v2h-1zM859 668h1v3h-1zM859 392h1v9h-1zM882 121h1v2h-1zM882 668h1v3h-1zM882 392h1v9h-1zM904 121h1v2h-1zM904 668h1v3h-1zM904 392h1v9h-1zM927 121h1v4h-1zM927 666h1v5h-1zM927 392h1v9h-1zM949 121h1v2h-1zM949 668h1v3h-1zM949 392h1v9h-1zM972 121h1v2h-1zM972 668h1v3h-1zM972 392h1v9h-1zM995 121h1v2h-1zM995 668h1v3h-1zM995 392h1v9h-1zM1017 121h1v2h-1zM1017 668h1v3h-1zM1017 392h1v9h-1zM1040 121h1v4h-1zM1040 666h1v5h-1zM1040 392h1v9h-1zM1062 121h1v2h-1zM1062 668h1v3h-1zM1062 392h1v9h-1zM1085 121h1v2h-1zM1085 668h1v3h-1zM1085 392h1v9h-1zM1107 121h1v2h-1zM1107 668h1v3h-1zM1107 392h1v9h-1zM1130 121h1v2h-1zM1130 668h1v3h-1zM1130 392h1v9h-1zM26 137h3v1h-3zM1149 137h4v1h-4zM585 137h9v1h-9zM26 154h3v1h-3zM1149 154h4v1h-4zM585 154h9v1h-9zM26 171h3v1h-3zM1149 171h4v1h-4zM585 171h9v1h-9zM26 188h5v1h-5zM1147 188h6v1h-6zM585 188h9v1h-9zM26 206h3v1h-3zM1149 206h4v1h-4zM585 206h9v1h-9zM26 223h3v1h-3zM1149 223h4v1h-4zM585 223h9v1h-9zM26 240h3v1h-3zM1149 240h4v1h-4zM585 240h9v1h-9zM26 257h5v1h-5zM1147 257h6v1h-6zM585 257h9v1h-9zM26 274h3v1h-3zM1149 274h4v1h-4zM585 274h9v1h-9zM26 292h3v1h-3zM1149 292h4v1h-4zM585 292h9v1h-9zM26 309h3v1h-3zM1149 309h4v1h-4zM585 309h9v1h-9zM26 326h5v1h-5zM1147 326h6v1h-6zM585 326h9v1h-9zM26 343h3v1h-3zM1149 343h4v1h-4zM585 343h9v1h-9zM26 361h3v1h-3zM1149 361h4v1h-4zM585 361h9v1h-9zM26 378h3v1h-3zM1149 378h4v1h-4zM585 378h9v1h-9zM26 412h3v1h-3zM1149 412h4v1h-4zM585 412h9v1h-9zM26 429h3v1h-3zM1149 429h4v1h-4zM585 429h9v1h-9zM26 447h3v1h-3zM1149 447h4v1h-4zM585 447h9v1h-9zM26 464h5v1h-5zM1147 464h6v1h-6zM585 464h9v1h-9zM26 481h3v1h-3zM1149 481h4v1h-4zM585 481h9v1h-9zM26 498h3v1h-3zM1149 498h4v1h-4zM585 498h9v1h-9zM26 516h3v1h-3zM1149 516h4v1h-4zM585 516h9v1h-9zM26 533h5v1h-5zM1147 533h6v1h-6zM585 533h9v1h-9zM26 550h3v1h-3zM1149 550h4v1h-4zM585 550h9v1h-9zM26 567h3v1h-3zM1149 567h4v1h-4zM585 567h9v1h-9zM26 584h3v1h-3zM1149 584h4v1h-4zM585 584h9v1h-9zM26 602h5v1h-5zM1147 602h6v1h-6zM585 602h9v1h-9zM26 619h3v1h-3zM1149 619h4v1h-4zM585 619h9v1h-9zM26 636h3v1h-3zM1149 636h4v1h-4zM585 636h9v1h-9zM26 653h3v1h-3zM1149 653h4v1h-4zM585 653h9v1h-9z" fill="#d8d8d8"/><rect x="588" y="120" width="1" height="551" fill="#d8d8d8"/><rect x="25" y="395" width="1128" height="1" fill="#d8d8d8"/><rect x="25" y="120" width="1129" height="1" fill="#fff"/><rect x="25" y="671" width="1129" height="1" fill="#fff"/><rect x="25" y="120" width="1" height="552" fill="#fff"/><rect x="1153" y="120" width="1" height="552" fill="#fff"/></svg>
<svg class="a" style="left:0;top:0" width="1366" height="746" shape-rendering="crispEdges"><rect x="26" y="307" width="1127" height="4" fill="#ffff00"/><path d="M34 305h1v2h-1zM60 305h1v2h-1zM74 305h1v2h-1zM81 305h1v2h-1zM82 305h1v2h-1zM83 305h1v2h-1zM94 305h1v2h-1zM95 305h1v2h-1zM97 305h1v2h-1zM100 305h1v2h-1zM106 305h1v2h-1zM109 305h1v2h-1zM118 305h1v2h-1zM174 305h1v2h-1zM191 305h1v2h-1zM195 305h1v2h-1zM203 305h1v2h-1zM222 305h1v2h-1zM233 305h1v2h-1zM242 305h1v2h-1zM247 305h1v2h-1zM258 305h1v2h-1zM264 305h1v2h-1zM265 305h1v2h-1zM267 305h1v2h-1zM286 305h1v2h-1zM289 305h1v2h-1zM298 305h1v2h-1zM349 305h1v2h-1zM375 305h1v2h-1zM399 305h1v2h-1zM402 305h1v2h-1zM404 305h1v2h-1zM406 305h1v2h-1zM413 305h1v2h-1zM416 305h1v2h-1zM434 305h1v2h-1zM455 305h1v2h-1zM458 305h1v2h-1zM459 305h1v2h-1zM465 305h1v2h-1zM466 305h1v2h-1zM467 305h1v2h-1zM476 305h1v2h-1zM502 305h1v2h-1zM512 305h1v2h-1zM521 305h1v2h-1zM524 305h1v2h-1zM534 305h1v2h-1zM535 305h1v2h-1zM543 305h1v2h-1zM546 305h1v2h-1zM557 305h1v2h-1zM559 305h1v2h-1zM575 305h1v2h-1zM577 305h1v2h-1zM578 305h1v2h-1zM587 305h1v2h-1zM602 305h1v2h-1zM640 305h1v2h-1zM644 305h1v2h-1zM651 305h1v2h-1zM663 305h1v2h-1zM691 305h1v2h-1zM699 305h1v2h-1zM705 305h1v2h-1zM713 305h1v2h-1zM724 305h1v2h-1zM747 305h1v2h-1zM756 305h1v2h-1zM781 305h1v2h-1zM782 305h1v2h-1zM793 305h1v2h-1zM803 305h1v2h-1zM835 305h1v2h-1zM836 305h1v2h-1zM845 305h1v2h-1zM846 305h1v2h-1zM858 305h1v2h-1zM877 305h1v2h-1zM878 305h1v2h-1zM898 305h1v2h-1zM912 305h1v2h-1zM917 305h1v2h-1zM926 305h1v2h-1zM931 305h1v2h-1zM937 305h1v2h-1zM945 305h1v2h-1zM946 305h1v2h-1zM948 305h1v2h-1zM968 305h1v2h-1zM979 305h1v2h-1zM989 305h1v2h-1zM1012 305h1v2h-1zM1021 305h1v2h-1zM1023 305h1v2h-1zM1024 305h1v2h-1zM1033 305h1v2h-1zM1038 305h1v2h-1zM1075 305h1v2h-1zM1077 305h1v2h-1zM1086 305h1v2h-1zM1091 305h1v2h-1zM1104 305h1v2h-1zM1106 305h1v2h-1zM1111 305h1v2h-1zM1122 305h1v2h-1zM1130 305h1v2h-1zM1132 305h1v2h-1zM1142 305h1v2h-1zM1144 305h1v2h-1z" fill="#00ff00"/><path d="M129 305h1v2h-1zM275 305h1v2h-1zM315 305h1v2h-1zM365 305h1v2h-1zM429 305h1v2h-1zM440 305h1v2h-1zM461 305h1v2h-1zM833 305h1v2h-1zM970 305h1v2h-1zM88 311h1v2h-1zM177 311h1v2h-1zM257 311h1v2h-1zM395 311h1v2h-1zM413 311h1v2h-1zM427 311h1v2h-1zM433 311h1v2h-1zM444 311h1v2h-1zM455 311h1v2h-1zM506 311h1v2h-1zM553 311h1v2h-1zM619 311h1v2h-1zM631 311h1v2h-1zM699 311h1v2h-1zM710 311h1v2h-1zM729 311h1v2h-1zM775 311h1v2h-1zM803 311h1v2h-1zM857 311h1v2h-1zM967 311h1v2h-1zM983 311h1v2h-1zM1035 311h1v2h-1zM1099 311h1v2h-1zM1123 311h1v2h-1z" fill="#ffff00"/></svg>

<svg class="a" style="left:0;top:0" width="1366" height="746">
<path d="M6 390h12l5.5 5.5-5.5 5.5h-12z" fill="#ffff00" stroke="#1a1a2a" stroke-width="0.6"/>
<path d="M6 608h12l5.5 5.5-5.5 5.5h-12z" fill="#00ffff" stroke="#2a1a1a" stroke-width="0.6"/>
<path d="M1174 304h-12l-5.5 5.5 5.5 5.5h12z" fill="#ffff00" stroke="#1a1a2a" stroke-width="0.6"/>
<path d="M584 106h11v8l-5.5 5.5-5.5-5.5z" fill="#ffa860" stroke="#222" stroke-width="0.6"/>
</svg>
<div class="a" style="left:10px;top:390.5px;font-size:9.5px;line-height:12px;color:#000">2</div>
<div class="a" style="left:9.5px;top:609px;font-size:9.5px;line-height:12px;color:#000">R</div>
<div class="a" style="left:1165px;top:304px;font-size:10px;line-height:12px;color:#000">T</div>
<div class="a" style="left:587px;top:106px;font-size:10px;line-height:11px;color:#000">T</div>


<div class="a" style="left:166px;top:604px;font-size:12px;color:#00ff00">CH1:Vtop = 6.56V</div>
<div class="a" style="left:166px;top:636px;font-size:12px;color:#00ff00">CH1:Vmid = 6.41V</div>
<div class="a" style="left:730px;top:604px;font-size:12px;color:#ffff00">CH2:Vtop = 6.56V</div>
<div class="a" style="left:730px;top:636px;font-size:12px;color:#ffff00">CH2:Vmid = 6.33V</div>

<!-- bottom status -->
<div class="a" style="left:6px;top:691px;width:86px;height:21px;background:#000"></div>
<div class="a" style="left:7px;top:695px;width:27px;height:15px;background:#00ff00"></div><div class="a" style="left:8px;top:696px;color:#000;font-size:12px;line-height:15px">CH1</div>
<div class="a" style="left:48px;top:696px;color:#00ff00;font-size:12px;line-height:15px">5.00V</div>

<div class="a" style="left:136px;top:691px;width:88px;height:21px;background:#000"></div>
<div class="a" style="left:137px;top:695px;width:27px;height:15px;background:#ffff00"></div><div class="a" style="left:138px;top:696px;color:#000;font-size:12px;line-height:15px">CH2</div>
<div class="a" style="left:180px;top:696px;color:#ffff00;font-size:12px;line-height:15px">5.00V</div>
<svg class="a" style="left:0;top:0" width="240" height="746" shape-rendering="crispEdges"><path d="M34 705h10v1h-10zM35 701h1v1h-1zM37 701h1v1h-1zM40 701h1v1h-1zM43 701h1v1h-1z" fill="#00ff00"/><path d="M164 705h10v1h-10zM165 701h1v1h-1zM167 701h1v1h-1zM170 701h1v1h-1zM173 701h1v1h-1z" fill="#ffff00"/></svg>
<!-- right panel -->

<div class="a" style="left:1174px;top:74px;width:191px;height:561px;background:#f0f0f0;border-left:1px solid #fff;border-top:1px solid #fff;border-right:1px solid #dcdcdc"></div>
<div class="a" style="left:1175px;top:75px;width:1px;height:560px;background:#f8f8f8"></div>
<div class="grp" style="left:1179px;top:83px;width:183px;height:99px"></div>
<div class="gtitle" style="left:1246px;top:76px;width:50px;height:14px"></div>
<div class="panel-lbl" style="left:1190px;top:91px;letter-spacing:-0.4px">Time / DIV</div>
<div class="ebox" style="left:1188px;top:107px;width:63px;height:22px;line-height:22px">20.0us</div>
<div class="panel-lbl" style="left:1191px;top:138px;letter-spacing:-0.2px">Format</div>
<div class="ebox" style="left:1188px;top:153px;width:63px;height:22px;line-height:22px">Y - T</div>
<div class="grp" style="left:1179px;top:195px;width:183px;height:221px"></div>
<div class="gtitle" style="left:1252px;top:188px;width:38px;height:14px">Vertical</div>
<div class="a" style="left:1188px;top:207px;width:13px;height:13px;background:#fff"></div>
<div class="panel-lbl" style="left:1204px;top:209px;font-size:10px">CH1</div>
<div class="ebox" style="left:1188px;top:225px;width:60px;height:22px;line-height:22px">5.00V</div>
<div class="ebox" style="left:1188px;top:253px;width:60px;height:22px;line-height:22px;letter-spacing:-1px">DC</div>
<div class="ebox" style="left:1188px;top:281px;width:60px;height:22px;line-height:22px">x 1</div>
<div class="a" style="left:1187px;top:314px;width:13px;height:13px;background:#fff"></div>
<div class="panel-lbl" style="left:1203px;top:316px;font-size:10px">CH2</div>
<div class="ebox" style="left:1187px;top:331px;width:60px;height:22px;line-height:22px">5.00V</div>
<div class="ebox" style="left:1187px;top:359px;width:60px;height:22px;line-height:22px;letter-spacing:-1px">DC</div>
<div class="ebox" style="left:1187px;top:387px;width:60px;height:22px;line-height:22px">x 1</div>
<div class="grp" style="left:1179px;top:429px;width:183px;height:137px"></div>
<div class="gtitle" style="left:1253px;top:422px;width:36px;height:14px">Trigger</div>
<div class="panel-lbl" style="left:1188px;top:451px;letter-spacing:-0.15px">Trigger Mode</div>
<div class="ebox" style="left:1281px;top:447px;width:62px;height:22px;line-height:22px">Edge</div>
<div class="panel-lbl" style="left:1188px;top:481px">Trigger Sweep</div>
<div class="ebox" style="left:1281px;top:477px;width:62px;height:22px;line-height:22px">Auto</div>
<div class="panel-lbl" style="left:1188px;top:510px">Trigger Source</div>
<div class="ebox" style="left:1281px;top:506px;width:62px;height:22px;line-height:22px">CH2</div>
<div class="panel-lbl" style="left:1188px;top:540px;letter-spacing:-0.15px">Trigger Slope</div>
<div class="ebox" style="left:1281px;top:536px;width:62px;height:22px;line-height:22px">+</div>
<svg class="a" style="left:0;top:0" width="1366" height="746" shape-rendering="crispEdges"><path d="M1335.66 161.66A37 37 0 1 0 1283.34 161.66" fill="none" stroke="#fff" stroke-width="1"/><path d="M1334.96 160.96A36 36 0 1 0 1284.04 160.96" fill="none" stroke="#000" stroke-width="1"/><path d="M1333.90 159.90A34.5 34.5 0 1 0 1285.10 159.90" fill="none" stroke="#fff" stroke-width="2"/><circle cx="1309.5" cy="135.5" r="33" fill="#d4d4d4" stroke="#000" stroke-width="1"/><path d="M1309.5 135.5L1334.03 114.18A32.5 32.5 0 0 1 1286.52 158.48Z" fill="#b4b4b4"/><circle cx="1309.5" cy="135.5" r="27" fill="#3333ff" stroke="#000" stroke-width="1"/><path d="M1286.2 158.8L1278.7 166.3" stroke="#000" stroke-width="1.25"/><path d="M1332.8 158.8L1340.3 166.3" stroke="#000" stroke-width="1.25"/><path d="M1314.8 132.8L1329.1 125.5" stroke="#fff" stroke-width="2.3" stroke-linecap="butt"/><path d="M1335.66 287.66A37 37 0 1 0 1283.34 287.66" fill="none" stroke="#fff" stroke-width="1"/><path d="M1334.96 286.96A36 36 0 1 0 1284.04 286.96" fill="none" stroke="#000" stroke-width="1"/><path d="M1333.90 285.90A34.5 34.5 0 1 0 1285.10 285.90" fill="none" stroke="#fff" stroke-width="2"/><circle cx="1309.5" cy="261.5" r="33" fill="#d4d4d4" stroke="#000" stroke-width="1"/><path d="M1309.5 261.5L1334.03 240.18A32.5 32.5 0 0 1 1286.52 284.48Z" fill="#b4b4b4"/><circle cx="1309.5" cy="261.5" r="27" fill="#00ee00" stroke="#000" stroke-width="1"/><path d="M1286.2 284.8L1278.7 292.3" stroke="#000" stroke-width="1.25"/><path d="M1332.8 284.8L1340.3 292.3" stroke="#000" stroke-width="1.25"/><path d="M1304.8 265.3L1292.4 275.3" stroke="#fff" stroke-width="2.3" stroke-linecap="butt"/><path d="M1335.66 392.66A37 37 0 1 0 1283.34 392.66" fill="none" stroke="#fff" stroke-width="1"/><path d="M1334.96 391.96A36 36 0 1 0 1284.04 391.96" fill="none" stroke="#000" stroke-width="1"/><path d="M1333.90 390.90A34.5 34.5 0 1 0 1285.10 390.90" fill="none" stroke="#fff" stroke-width="2"/><circle cx="1309.5" cy="366.5" r="33" fill="#d4d4d4" stroke="#000" stroke-width="1"/><path d="M1309.5 366.5L1334.03 345.18A32.5 32.5 0 0 1 1286.52 389.48Z" fill="#b4b4b4"/><circle cx="1309.5" cy="366.5" r="27" fill="#ffff00" stroke="#000" stroke-width="1"/><path d="M1286.2 389.8L1278.7 397.3" stroke="#000" stroke-width="1.25"/><path d="M1332.8 389.8L1340.3 397.3" stroke="#000" stroke-width="1.25"/><path d="M1304.8 370.3L1292.4 380.3" stroke="#fff" stroke-width="2.3" stroke-linecap="butt"/></svg>

<!-- overlay -->
<div class="a" style="left:1006px;top:635px;width:360px;height:79px;background:#fff"></div>
<div class="a" style="left:1006px;top:714px;width:168px;height:1px;background:#222"></div>
<div class="a" style="left:1174px;top:714px;width:191px;height:3px;background:#f0f0f0"></div>
<div class="a" style="left:0;top:717px;width:1366px;height:1px;background:#e2e2e2"></div>
<div class="a" style="left:464px;top:722px;width:4px;height:15px;background:#f0f0f0"></div>
</body></html>
